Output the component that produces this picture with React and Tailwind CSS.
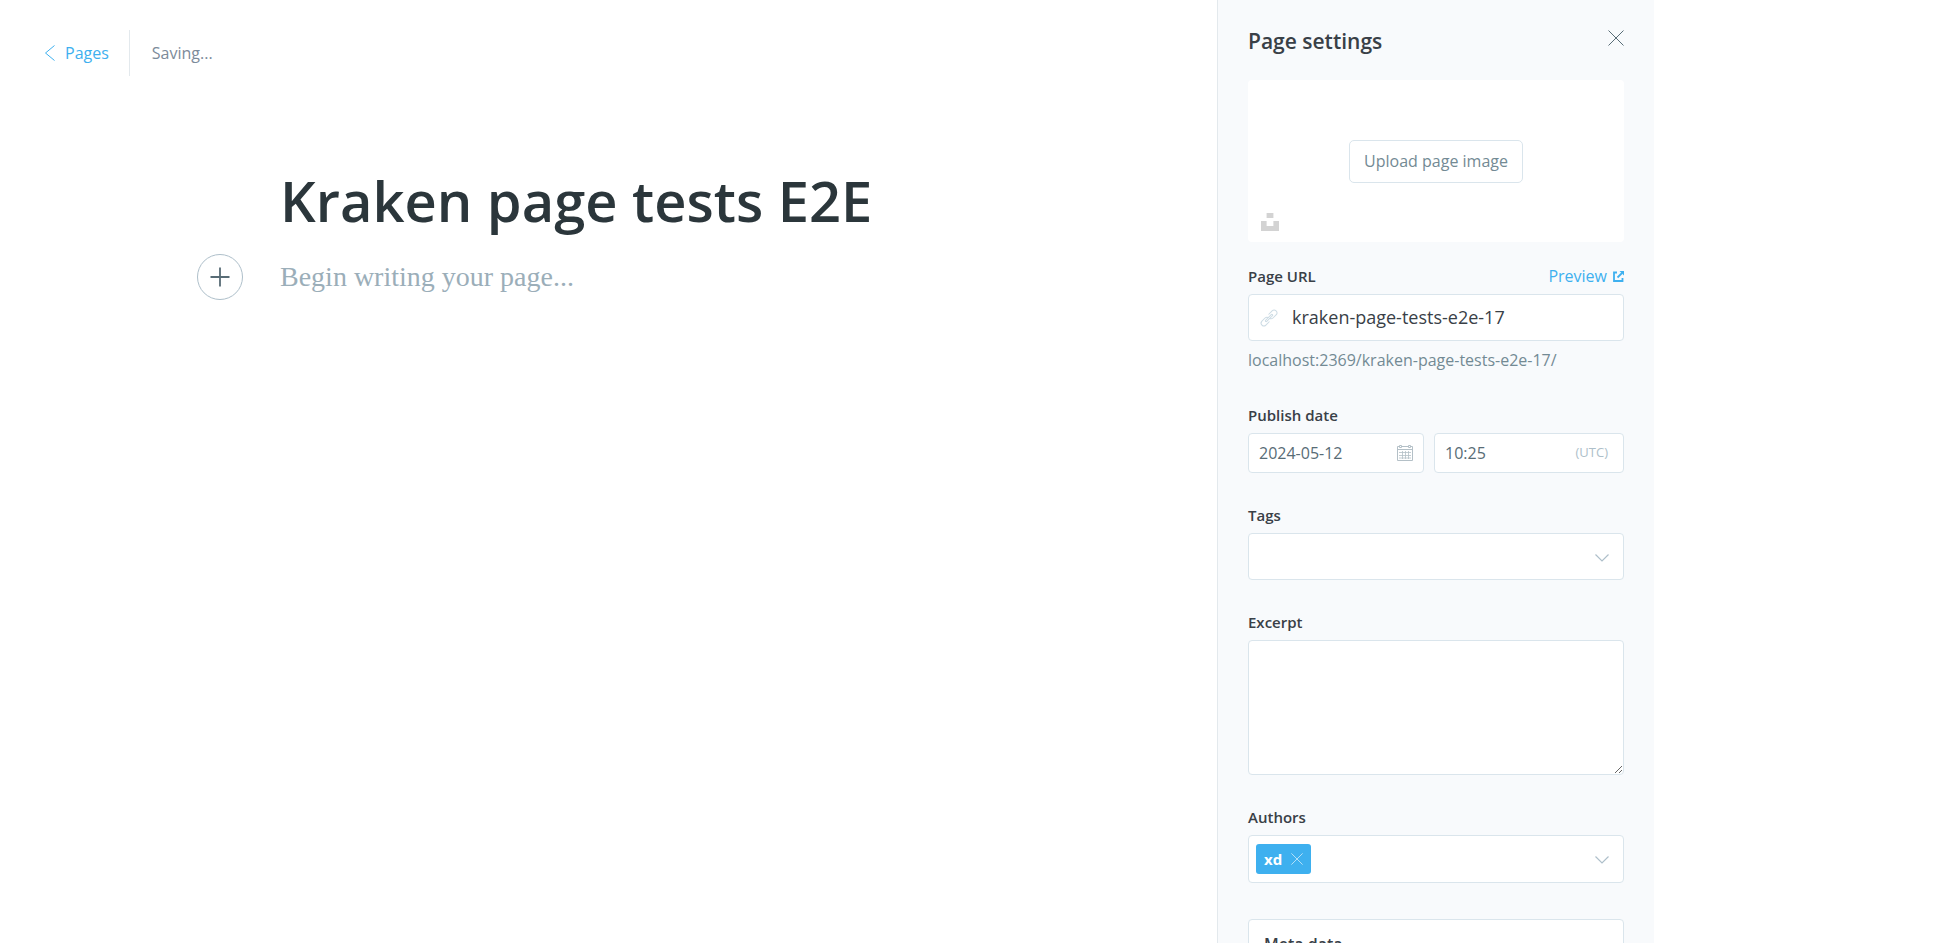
import React, { useState } from "react";

function CloseIcon({ className }) {
  return (
    <svg className={className} viewBox="0 0 16 16" fill="none" stroke="currentColor" aria-hidden="true">
      <path d="M0.5 0.5l15 15M15.5 0.5l-15 15" />
    </svg>
  );
}

function ChevronDown() {
  return (
    <svg className="h-4 w-4 shrink-0 text-[#aebfca]" viewBox="0 0 16 16" fill="none" stroke="currentColor" aria-hidden="true">
      <path d="M1.5 5.5l6.5 6.500l6.500-6.500" strokeWidth="1.2" />
    </svg>
  );
}

function ArrowLeft() {
  return (
    <svg className="h-4 w-[10px] shrink-0" viewBox="0 0 10 16" fill="none" stroke="currentColor" aria-hidden="true">
      <path d="M9.500 0.500l-9 7.500l9 7.500" />
    </svg>
  );
}

function UnsplashIcon() {
  return (
    <svg className="h-[18px] w-[18px]" viewBox="0 0 18 18" fill="#d3d3d3" aria-hidden="true">
      <path d="M5.600 0h6.800v5.100H5.600zM12.400 8H18v10H0V8h5.600v5h6.800z" />
    </svg>
  );
}

function ExternalIcon() {
  return (
    <svg className="h-[11px] w-[11px]" viewBox="0 0 11 11" fill="none" stroke="currentColor" strokeWidth="1.800" aria-hidden="true">
      <path d="M4 1.500H1v8.500h8.500V7" />
      <path d="M4.500 6.500L9 2" />
      <path d="M6.500 0H11v4.500z" fill="currentColor" stroke="none" />
    </svg>
  );
}

function LinkIcon() {
  return (
    <svg className="h-4 w-4 shrink-0 overflow-visible" viewBox="0 0 16 16" fill="none" stroke="#ccdbe4" strokeLinecap="round" strokeLinejoin="round" aria-hidden="true">
      <g transform="rotate(-45 8 8)">
        <path d="M5.500 10.800H0.800a2.800 2.800 0 0 1 0-5.600H5.200a2.800 2.800 0 0 1 2.600 1.800" />
        <path d="M10.500 5.200h4.700a2.800 2.800 0 0 1 0 5.600H10.800a2.800 2.800 0 0 1-2.600-1.800" />
        <path d="M4 8.800a0.800 0.800 0 0 1 0-1.600h8a0.800 0.800 0 0 1 0 1.600z" />
      </g>
    </svg>
  );
}

function CalendarIcon() {
  return (
    <svg className="h-4 w-4 shrink-0" viewBox="0 0 16 16" fill="none" stroke="#b4c0c7" aria-hidden="true">
      <path d="M2.500 1.500H0.500v14h15v-14h-2M5 1.500h6M0.500 4.500h15" />
      <path d="M2.500 0.500h2v2h-2zM11.500 0.500h2v2h-2z" />
      <path d="M5.500 6v8M8.500 6v8M11.500 6v8M2 7.500h12M2 10.500h12M2 13h12" strokeWidth="0.800" />
    </svg>
  );
}

const label = "block text-[15px] leading-5 font-semibold text-[#394047]";
const box = "rounded-[4px] border border-[#dae5ec] bg-white";

export default function App() {
  const [slug, setSlug] = useState("kraken-page-tests-e2e-17");
  const [date, setDate] = useState("2024-05-12");
  const [time, setTime] = useState("10:25");
  const [authors, setAuthors] = useState(["xd"]);

  return (
    <div className="flex h-screen overflow-hidden bg-white pr-[279px] font-['Open_Sans','Noto_Sans',sans-serif] text-[#394047]">
      <main className="min-w-0 flex-1">
        <header className="flex items-center px-[45px] pt-[30px] text-[16px] leading-5">
          <a href="#pages" className="flex h-[46px] items-center gap-[10px] border-r border-[#e3e9ed] pr-5 text-[#3eb0ef]">
            <ArrowLeft />
            Pages
          </a>
          <span className="pl-[22px] text-[#7c8b9a]">Saving...</span>
        </header>
        <div className="mx-auto max-w-[823px] pt-[82px]">
          <h1 className="pl-[83px] text-[56px] leading-[84px] font-semibold text-[#2b363b]">Kraken page tests E2E</h1>
          <div className="flex items-center gap-[37px] pt-3">
            <button type="button" aria-label="Add a card" className="flex h-[46px] w-[46px] items-center justify-center rounded-full border border-[#aebfca] text-[#586c76]">
              <svg className="h-5 w-5" viewBox="0 0 20 20" fill="none" stroke="currentColor" strokeWidth="1.800" aria-hidden="true">
                <path d="M10 0.500v19M0.500 10h19" />
              </svg>
            </button>
            <p className="font-['Liberation_Serif',serif] text-[28px] leading-10 text-[#9baeb9]">Begin writing your page...</p>
          </div>
        </div>
      </main>

      <aside className="w-[437px] shrink-0 border-l border-[#e3e9ed] bg-[#f8fafc] px-[30px] pt-[25px]">
        <div className="flex h-[55px] items-start justify-between">
          <h2 className="text-[21px] leading-8 font-semibold">Page settings</h2>
          <button type="button" aria-label="Close" className="mt-[5px] text-[#586c76]">
            <CloseIcon className="h-4 w-4" />
          </button>
        </div>

        <div className="relative flex h-[162px] items-center justify-center rounded-[4px] bg-white">
          <button type="button" className="h-[43px] rounded-[5px] border border-[#dae5ec] px-[14px] text-[16px] leading-5 text-[#738a94]">
            Upload page image
          </button>
          <button type="button" aria-label="Unsplash" className="absolute bottom-[11px] left-[13px]">
            <UnsplashIcon />
          </button>
        </div>

        <form className="flex flex-col gap-8 pt-6">
          <div>
            <div className="flex items-center justify-between pb-2">
              <label htmlFor="url" className={label}>Page URL</label>
              <a href="#preview" className="flex items-center gap-[6px] text-[16px] leading-5 text-[#3eb0ef]">
                Preview
                <ExternalIcon />
              </a>
            </div>
            <div className={`flex h-[47px] items-center gap-[15px] px-3 ${box}`}>
              <LinkIcon />
              <input id="url" value={slug} onChange={(e) => setSlug(e.target.value)} className="min-w-0 flex-1 bg-transparent text-[18px] outline-none" />
            </div>
            <p className="pt-[9px] pb-[3px] text-[16px] leading-5 text-[#738a94]">localhost:2369/{slug}/</p>
          </div>

          <div>
            <label htmlFor="date" className={`pb-2 ${label}`}>Publish date</label>
            <div className="flex gap-[10px]">
              <div className={`flex h-[40px] w-[176px] items-center px-[10px] ${box}`}>
                <input id="date" value={date} onChange={(e) => setDate(e.target.value)} className="min-w-0 flex-1 bg-transparent text-[16px] text-[#586c76] outline-none" />
                <CalendarIcon />
              </div>
              <div className={`flex h-[40px] min-w-0 flex-1 items-center pr-[15px] pl-[10px] ${box}`}>
                <input aria-label="Publish time" value={time} onChange={(e) => setTime(e.target.value)} className="min-w-0 flex-1 bg-transparent text-[16px] text-[#586c76] outline-none" />
                <span className="text-[13px] text-[#aebfca]">(UTC)</span>
              </div>
            </div>
          </div>

          <div>
            <label htmlFor="tags" className={`pb-2 ${label}`}>Tags</label>
            <div className={`flex h-[47px] items-center pr-[13px] pl-2 ${box}`}>
              <input id="tags" role="combobox" aria-expanded="false" className="min-w-0 flex-1 bg-transparent text-[16px] outline-none" />
              <ChevronDown />
            </div>
          </div>

          <div>
            <label htmlFor="excerpt" className={`pb-2 ${label}`}>Excerpt</label>
            <textarea id="excerpt" className={`block h-[135px] w-full resize-y px-3 py-2 text-[16px] outline-none ${box}`} />
          </div>

          <div>
            <label htmlFor="authors" className={`pb-2 ${label}`}>Authors</label>
            <div className={`flex h-[48px] items-center gap-2 pr-[13px] pl-[7px] ${box}`}>
              {authors.map((name) => (
                <span key={name} className="flex h-[30px] items-center gap-[9px] rounded-[3px] bg-[#3eb0ef] px-2 text-[15px] leading-5 font-bold text-white">
                  {name}
                  <button type="button" aria-label={`Remove ${name}`} onClick={() => setAuthors(authors.filter((a) => a !== name))}>
                    <CloseIcon className="h-3 w-3 opacity-80" />
                  </button>
                </span>
              ))}
              <input id="authors" role="combobox" aria-expanded="false" className="min-w-0 flex-1 bg-transparent text-[16px] outline-none" />
              <ChevronDown />
            </div>
          </div>

          <button type="button" className={`mt-1 flex h-[88px] shrink-0 items-start px-[15px] pt-[14px] text-[16px] leading-5 font-semibold ${box}`}>
            Meta data
          </button>
        </form>
      </aside>
    </div>
  );
}
